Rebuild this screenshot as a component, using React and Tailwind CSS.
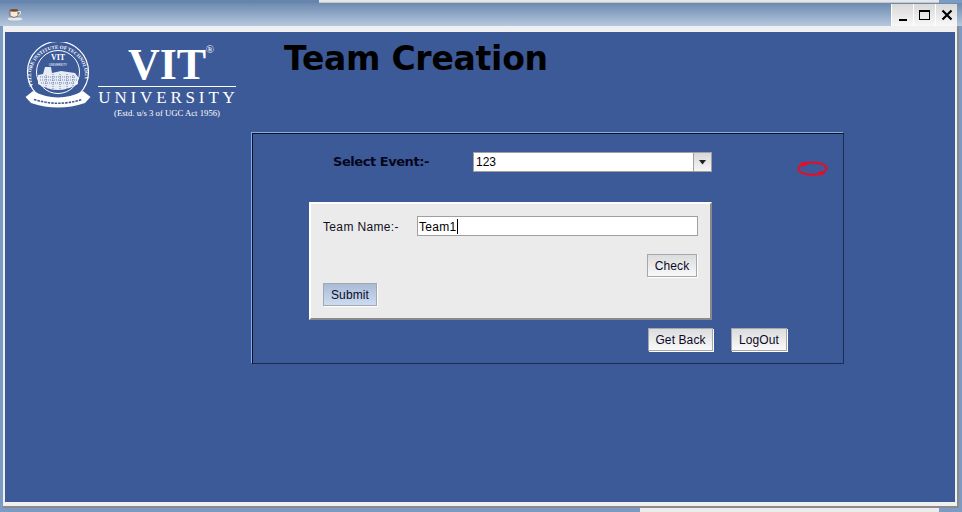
const ui = { fontFamily: '"Liberation Sans", Arial, sans-serif' };
const serif = { fontFamily: '"Liberation Serif", "Times New Roman", serif' };
const tahoma = { fontFamily: '"DejaVu Sans", Verdana, sans-serif' };

function Seal() {
  return (
    <svg width="66" height="68" viewBox="0 0 66 68" className="shrink-0">
      <defs>
        <path id="sealArc" d="M8 44 A27 27 0 1 1 58 44" fill="none" />
      </defs>
      <circle cx="33" cy="30" r="30.5" fill="none" stroke="#fff" strokeWidth="1.2" />
      <circle cx="33" cy="30" r="21.5" fill="none" stroke="#fff" strokeWidth="1" />
      <text fontSize="5" fill="#fff" style={serif} fontWeight="700">
        <textPath href="#sealArc">VELLORE INSTITUTE OF TECHNOLOGY</textPath>
      </text>
      <text x="33" y="18" textAnchor="middle" fontSize="8" fontWeight="700" fill="#fff" style={serif}>VIT</text>
      <text x="33" y="23.5" textAnchor="middle" fontSize="3" fill="#fff" style={ui}>UNIVERSITY</text>
      <path d="M13 42 L13 33 L18 32 L20 25 L26 25 L27 31 L36 29 L50 31 L53 35 L53 42 Q33 54 13 42Z" fill="#fff" opacity="0.88" />
      <path d="M15 35H51M15 38H52M16 41H50M21 33V46M28 32V48M35 32V49M42 32V48M48 33V45" stroke="#3c5a98" strokeWidth="0.7" strokeDasharray="1 1" />
      <path d="M0.5 55 L8 49 Q33 62 58 49 L65.5 55 L60 61 Q33 70 6 61Z" fill="#fff" />
      <path d="M9 57.5 Q33 65 57 57.5" fill="none" stroke="#3c5a98" strokeWidth="1.6" strokeDasharray="2.5 1" />
    </svg>
  );
}

function Logo() {
  return (
    <div className="flex items-start text-white">
      <Seal />
      <div className="ml-[6px] mt-[3px] w-[140px] flex flex-col items-center" style={serif}>
        <div className="relative h-[37px] text-[44px] leading-[40px] font-bold">
          VIT
          <span className="absolute right-[-8px] top-[-2px] text-[11px] leading-[12px] font-normal">®</span>
        </div>
        <div className="w-[138px] h-px bg-white mt-[4px]" />
        <div className="mt-[1px] text-[17px] leading-[19px] tracking-[3.85px] whitespace-nowrap pl-[3px]">UNIVERSITY</div>
        <div className="mt-[1px] text-[8.7px] leading-[10px] whitespace-nowrap">(Estd. u/s 3 of UGC Act 1956)</div>
      </div>
    </div>
  );
}

function Btn({ children, className = "" }) {
  return (
    <button
      className={"flex items-center justify-center border border-[#a3a8b0] text-[12px] tracking-[0.1px] text-[#0a0a28] shadow-[1px_1px_0_#fff] " + className}
      style={ui}
    >
      {children}
    </button>
  );
}

function Spinner() {
  return (
    <svg width="32" height="16" viewBox="0 0 32 16" className="shrink-0">
      <g fill="none" stroke="#ee0a24" strokeWidth="2">
        <path d="M8 2.6 C13 1 24 1 28 4.5 C31 7 29 11 23 12.6" />
        <path d="M23 13 C17 14.3 7 14 3 10.5 C0 7.5 2 5 6 3.5" />
      </g>
      <path d="M4 1 L10 1.5 L10 5 L4 5Z M21 10.5 L26.5 10.5 L26.5 14 L21 14Z" fill="#ee0a24" />
    </svg>
  );
}

function WinBtn({ children, className = "" }) {
  return (
    <div className={"w-[22px] h-[22px] bg-gradient-to-b from-[#d8d8d8] to-[#f8f8f8] border-l border-white flex justify-center " + className}>
      {children}
    </div>
  );
}

export default function App() {
  return (
    <div className="w-[962px] h-[512px] overflow-hidden flex flex-col bg-[#7d9ac2]" style={ui}>
      <div className="h-[3px] shrink-0 flex">
        <div className="w-[319px] bg-[#6685ae]" />
        <div className="w-[620px] bg-[#e6e6e6] border-b border-[#c4c8ce]" />
      </div>
      <div className="h-[23px] shrink-0 pl-[7px] flex items-start bg-gradient-to-b from-[#6d8ab0] to-[#b6c8de]">
        <svg width="16" height="13" viewBox="0 0 16 13" className="mt-[5px]">
          <ellipse cx="8" cy="11" rx="7.5" ry="1.6" fill="#e8e8e8" />
          <path d="M3 2 H11 V8 Q7 11 3 8Z" fill="#f3ecd8" stroke="#5a4a3a" strokeWidth="0.7" />
          <ellipse cx="7" cy="2.5" rx="4" ry="1.2" fill="#7a4520" />
          <path d="M11 3.5 H13.5 V6 L11 7.5" fill="none" stroke="#e8e0d0" strokeWidth="1" />
        </svg>
        <div className="ml-auto flex pr-[5px] mt-[1px]">
          <WinBtn className="items-end pb-[5px]"><div className="w-[8px] h-[2px] bg-black" /></WinBtn>
          <WinBtn className="items-center"><div className="w-[11px] h-[10px] border border-black border-t-2" /></WinBtn>
          <WinBtn className="items-center">
            <svg width="12" height="12" viewBox="0 0 12 12">
              <path d="M1.5 1.5 L10.5 10.5 M10.5 1.5 L1.5 10.5" stroke="#000" strokeWidth="2.2" />
            </svg>
          </WinBtn>
        </div>
      </div>

      <div className="ml-[3px] w-[956px] h-[482px] shrink-0 bg-[#f0f0f0] pt-[6px] pl-[2px] border-r-2 border-b-2 border-[#8a8a8a]">
        <div className="w-[950px] h-[470px] bg-[#3c5a98] pt-[10px] pl-[20px]">
          <div className="flex items-start h-[91px]">
            <Logo />
            <h1 className="ml-[47px] -mt-[1px] text-[33px] leading-[36px] font-bold tracking-[-0.25px] text-black whitespace-nowrap" style={tahoma}>
              Team Creation
            </h1>
          </div>

          <div className="ml-[227px] w-[592px] h-[231px] border border-[#1d2c52] border-t-[#0a1020] border-l-[#0a1020] shadow-[-1px_-1px_0_#7fb0ee] pt-[18px]">
            <div className="flex items-start pl-[80px] h-[25px]">
              <div className="w-[140px] text-[13px] leading-[20px] font-bold tracking-[-0.45px] text-[#06061c]" style={tahoma}>
                Select Event:-
              </div>
              <div className="w-[239px] h-[20px] flex border border-[#a0a0a0] bg-white shrink-0">
                <div className="flex-1 text-[12px] leading-[18px] pl-[2px] text-black">123</div>
                <div className="w-[18px] border-l border-[#a0a0a0] bg-gradient-to-b from-[#d8d8d8] to-[#f6f6f6] flex items-center justify-center">
                  <svg width="8" height="5" viewBox="0 0 8 5"><path d="M0 0H7L3.5 4.5Z" fill="#222" /></svg>
                </div>
              </div>
              <div className="ml-[85px] mt-[9px]"><Spinner /></div>
            </div>

            <div className="ml-[56px] mt-[25px] w-[403px] h-[118px] bg-[#ebebeb] border-t-2 border-l-2 border-t-white border-l-white border-r-2 border-b-2 border-r-[#8a8a8a] border-b-[#8a8a8a] pt-[12px] pl-[12px]">
              <div className="flex items-center h-[20px]">
                <div className="w-[94px] text-[12px] tracking-[0.35px] text-[#10101c] pt-[1px]">Team Name:-</div>
                <div className="w-[281px] h-[20px] border border-[#a0a0a0] bg-white text-[12px] tracking-[0.3px] leading-[18px] pl-[1px] text-black flex items-center">
                  <span className="pt-[1px]">Team1</span><span className="inline-block w-px h-[15px] bg-black" />
                </div>
              </div>
              <div className="flex justify-end pr-[13px] mt-[18px]">
                <Btn className="w-[50px] h-[23px] bg-gradient-to-b from-[#dcdcdc] to-[#f8f8f8]">Check</Btn>
              </div>
              <Btn className="w-[54px] h-[23px] mt-[6px] bg-gradient-to-b from-[#a9bbd6] to-[#cddcf0]">Submit</Btn>
            </div>

            <div className="flex pl-[395px] mt-[8px]">
              <Btn className="w-[65px] h-[23px] bg-gradient-to-b from-[#dcdcdc] to-[#fafafa]">Get Back</Btn>
              <Btn className="w-[56px] h-[23px] ml-[18px] bg-gradient-to-b from-[#dcdcdc] to-[#fafafa]">LogOut</Btn>
            </div>
          </div>
        </div>
      </div>

      <div className="flex-1 flex">
        <div className="w-[640px]" />
        <div className="w-[299px] bg-[#ececec]" />
      </div>
    </div>
  );
}
